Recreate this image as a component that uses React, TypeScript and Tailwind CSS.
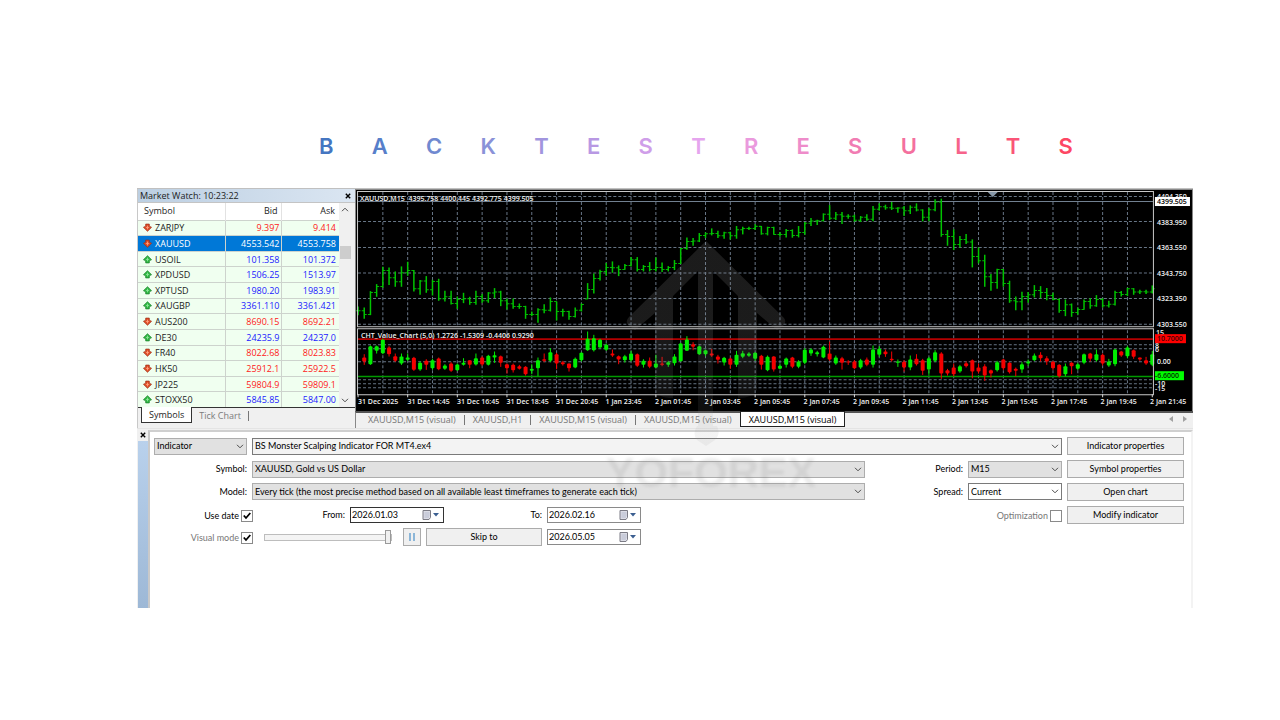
import React from "react";

const letters: [string, string][] = [
  ["B", "#4576c1"], ["A", "#577fca"], ["C", "#7089d0"], ["K", "#8a92d8"], ["T", "#a195de"],
  ["E", "#b898e3"], ["S", "#cf9ee9"], ["T", "#e5a5ee"], ["R", "#ea9add"], ["E", "#ee8cca"],
  ["S", "#f17cb3"], ["U", "#f4709e"], ["L", "#f6638a"], ["T", "#fa5577"], ["S", "#fd4763"],
];

const quotes: [string, string, string, boolean][] = [
  ["ZARJPY", "9.397", "9.414", false],
  ["XAUUSD", "4553.542", "4553.758", false],
  ["USOIL", "101.358", "101.372", true],
  ["XPDUSD", "1506.25", "1513.97", true],
  ["XPTUSD", "1980.20", "1983.91", true],
  ["XAUGBP", "3361.110", "3361.421", true],
  ["AUS200", "8690.15", "8692.21", false],
  ["DE30", "24235.9", "24237.0", true],
  ["FR40", "8022.68", "8023.83", false],
  ["HK50", "25912.1", "25922.5", false],
  ["JP225", "59804.9", "59809.1", false],
  ["STOXX50", "5845.85", "5847.00", true],
];

// Price bars: high, low, close in thirds of a unit below the pane origin.
const bars =
  "367-393-380 370-404-391 321-393-325 300-338-307 248-311-259 250-303-281 262-308-293 247-308-266 233-275-259 258-322-314 288-332-291 276-326-317 287-334-292 284-350-344 320-352-338 320-361-358 337-374-346 326-357-344 338-362-355 320-362-337 330-356-350 324-356-327 312-342-324 320-366-350 343-376-359 343-374-367 358-374-367 365-404-391 382-396-391 372-416-377 360-387-378 340-382-352 352-409-382 374-397-382 380-407-397 370-400-378 358-382-361 297-345-316 268-328-283 257-289-262 237-275-250 232-266-251 244-276-256 240-257-244 219-247-227 219-262-256 243-262-247 234-262-256 220-262-250 235-264-256 246-262-250 228-258-238 192-240-193 160-197-172 162-185-171 147-174-154 145-162-149 133-154-148 140-162-155 143-164-146 143-166-155 126-164-137 128-151-133 128-138-133 121-138-127 126-152-149 128-154-130 128-152-151 144-158-151 135-160-139 136-161-154 126-160-145 114-152-118 102-126-111 107-123-110 88-112-91 63-108-103 84-108-92 84-120-97 91-104-97 92-113-109 96-114-100 91-110-106 66-112-76 58-80-68 62-77-71 54-78-73 70-86-72 66-96-80 64-90-70 58-82-78 76-112-100 72-112-77 46-82-54 44-158-151 138-185-157 136-198-181 156-190-166 150-180-174 166-250-217 190-238-230 212-308-278 270-320-295 254-314-256 255-308-298 290-356-350 337-378-353 323-378-337 324-356-332 303-340-319 306-342-325 312-348-334 326-348-346 343-386-379 346-396-362 358-398-385 370-392-376 346-377-352 342-374-365 333-368-346 342-370-365 350-370-360 320-364-325 321-337-331 311-336-314 312-332-324 317-330-323 317-330-324 304-328-314"
    .split(" ")
    .map((b) => b.split("-").map(Number));

// Value chart candles: colour, body top, body bottom, wick top, wick bottom.
const candles =
  "r100-112-90-122 g66-120-64-122 g66-80-64-88 g47-87-44-90 r70-90-66-97 r96-110-88-113 g97-118-88-122 g100-107-88-110 r101-137-98-140 g116-136-112-140 r110-122-105-137 g108-132-104-137 r103-135-100-138 g124-134-120-137 r118-140-114-143 g121-138-118-140 g116-122-102-124 r108-122-108-132 g102-121-88-124 r100-121-96-125 g95-122-92-124 g93-100-82-116 r96-116-94-128 r120-132-118-148 r122-138-118-145 r126-134-122-136 r128-150-126-154 g134-140-120-150 g108-132-100-156 r105-110-88-114 g84-110-72-114 r90-118-86-135 r114-120-110-124 r118-132-118-142 g104-130-100-132 g86-108-84-112 g44-78-22-80 g42-78-32-82 g47-70-44-73 g62-77-58-80 r88-94-76-98 r96-106-94-120 g96-108-92-115 g88-108-80-112 r90-125-88-128 g110-122-105-130 r110-128-100-132 g118-130-92-132 r118-122-98-126 g114-122-110-128 g97-117-90-124 g58-111-56-112 g46-80-36-80 r60-68-54-78 g66-90-64-92 g78-90-76-96 r88-94-74-98 r97-107-92-118 g101-115-98-124 r103-122-100-134 g92-122-80-128 g87-98-80-102 g88-95-84-98 g86-104-84-110 r95-122-92-136 g98-138-94-141 r97-136-96-142 g125-134-118-136 g103-122-100-130 r100-128-98-132 g112-128-108-132 g77-116-72-120 g76-88-72-95 g84-90-80-97 g68-100-64-102 r88-106-52-110 g100-118-94-122 r102-116-98-136 r112-115-108-122 r112-132-108-135 g108-130-104-134 r106-122-100-126 g76-122-64-130 g74-92-66-98 r82-90-76-98 r104-108-82-112 g112-116-106-128 r113-130-108-142 g106-130-94-138 r104-120-90-124 r108-140-104-152 g102-136-98-152 g84-110-78-114 r88-148-84-164 r138-148-134-154 r130-150-118-156 g126-142-122-146 r117-126-112-130 r108-142-106-162 r130-142-118-148 r126-154-120-170 r138-148-136-160 g114-138-110-142 r106-132-104-138 r116-144-114-148 r134-140-130-156 g120-136-114-146 g112-118-106-126 g94-108-88-110 r92-102-84-112 r102-112-96-122 r113-132-110-138 r122-156-120-160 g126-150-118-156 r116-126-114-150 g120-134-116-138 g90-116-88-120 r88-104-86-112 g90-108-76-112 r92-118-88-124 g112-124-104-128 g76-120-74-126 r82-94-80-98 g70-96-66-102 r78-98-76-104 r100-106-100-110 r108-118-98-122 g90-122-80-126"
    .split(" ")
    .map((c) => ({ up: c[0] === "g", v: c.slice(1).split("-").map(Number) }));

const times = [
  "31 Dec 2025", "31 Dec 14:45", "31 Dec 16:45", "31 Dec 18:45", "31 Dec 20:45", "1 Jan 23:45",
  "2 Jan 01:45", "2 Jan 03:45", "2 Jan 05:45", "2 Jan 07:45", "2 Jan 09:45", "2 Jan 11:45",
  "2 Jan 13:45", "2 Jan 15:45", "2 Jan 17:45", "2 Jan 19:45", "2 Jan 21:45",
];

const barX = (i: number) => 3 + i * 6.198;

function PriceChart() {
  const grid = Array.from({ length: 31 }, (_, i) => barX((i + 1) * 4));
  const py = (v: number) => v / 3 - 5;
  const vy = (v: number) => v / 3 + 135;
  return (
    <svg viewBox="0 0 837 222" className="block h-auto w-full bg-black" role="img" aria-label="XAUUSD M15 chart" fontFamily="'Open Sans', 'Noto Sans', sans-serif" fontWeight="600">
      <g stroke="#677585" strokeWidth="1" strokeDasharray="3 2">
        {grid.map((x) => (
          <path key={x} d={`M${x} 3V136M${x} 141V205`} />
        ))}
        {[7.5, 32.5, 58.5, 84, 109.5, 135, 155.5, 159.5, 172.5, 190.5, 194.5, 198.5].map((y) => (
          <path key={y} d={`M3 ${y}H797`} />
        ))}
      </g>
      <path d="M3 12.5H797" stroke="#718090" />
      <path d="M632 3h10l-5 5z" fill="#8797a8" />
      <g fill="none">
        {bars.map(([h, l, c], i) => {
          const o = i ? bars[i - 1][2] : c;
          const open = Math.min(Math.max(o, h), l);
          const x = barX(i);
          return (
            <g key={i}>
              <path d={`M${x - 2.5} ${py(open)}H${x}M${x} ${py(c)}h2.500`} stroke="#00b400" />
              <path d={`M${x} ${py(h)}V${py(l)}`} stroke="#00c400" strokeWidth="1.500" />
            </g>
          );
        })}
      </g>
      <path d="M3 150H797" stroke="#b40000" strokeWidth="1.6" />
      <path d="M3 187.3H797" stroke="#009a00" strokeWidth="1.6" />
      {candles.map(({ up, v }, i) => (
        <g key={i} fill={up ? "#00ee00" : "#f40000"}>
          <rect x={barX(i + 1) - 2} y={vy(v[0])} width="4" height={(v[1] - v[0]) / 3} rx="1" />
          <rect x={barX(i + 1) - 0.5} y={vy(v[2])} width="1" height={(v[3] - v[2]) / 3} />
        </g>
      ))}
      <path d="M2.5 2.5H797.5V137.5H2.5zM2.5 139.5H797.5V205.5H2.5z" fill="none" stroke="#c8c8c8" />
      <path d="M0.5 222V0.5H836.5V222" fill="none" stroke="#8a8a8a" />
      <g fill="#f0f0f0" fontSize="7">
        <text x="5" y="12">XAUUSD,M15&nbsp; 4395.758 4400.445 4392.775 4399.505</text>
        <text x="6" y="148.500">CHT_Value_Chart (5,0) 1.2726 -1.5309 -0.4406 0.9290</text>
        <text x="801" y="10">4404.350</text>
        <text x="801" y="35.500">4383.950</text>
        <text x="801" y="61">4363.550</text>
        <text x="801" y="86.500">4343.750</text>
        <text x="801" y="112">4323.350</text>
        <text x="801" y="138">4303.550</text>
        <text x="800" y="146">15</text>
        <text x="799" y="159">8</text>
        <text x="799" y="163">6</text>
        <text x="801" y="175">0.00</text>
        <text x="799" y="197">-10</text>
        <text x="799" y="202">-15</text>
        {times.map((t, i) => (
          <text key={t} x={3 + i * 49.45} y="215">{t}</text>
        ))}
      </g>
      <path d={times.map((_, i) => `M${barX(i * 8)} 205v3`).join("")} stroke="#d8d8d8" />
      <rect x="799" y="8" width="35" height="9" fill="#fff" />
      <text x="801" y="15" fontSize="7" fill="#000">4399.505</text>
      <rect x="799" y="145" width="31" height="9" fill="#ff0000" />
      <text x="801" y="152" fontSize="7" fill="#400000">10.7000</text>
      <rect x="799" y="182" width="29" height="9" fill="#00ff00" />
      <text x="799" y="189" fontSize="7" fill="#003000">-6.6000</text>
    </svg>
  );
}

function Direction({ up }: { up: boolean }) {
  return (
    <svg viewBox="0 0 10 10" className={up ? "size-[9px]" : "size-[9px] rotate-180"} aria-hidden="true">
      <path d="M5 .8 9.500 5.200 7 6.500V8.800H3V6.500L.5 5.200z" fill={up ? "#2fb944" : "#e04e28"} stroke={up ? "#1c7f2b" : "#9c2f16"} strokeWidth=".8" />
      <path d="M5 3v4M3.500 5h3" stroke={up ? "#8fe59a" : "#ff9f7d"} />
    </svg>
  );
}

function Chevron({ className = "" }: { className?: string }) {
  return (
    <svg viewBox="0 0 8 5" className={"pointer-events-none h-[5px] w-2 " + className} aria-hidden="true">
      <path d="M1 .8 4 3.800 7 .8" fill="none" stroke="#4c4c4c" />
    </svg>
  );
}

function CloseIcon() {
  return (
    <svg viewBox="0 0 6 6" className="size-[6px]" aria-hidden="true">
      <path d="M.8.8l4.400 4.400M5.200.8.8 5.200" stroke="#000" strokeWidth="1.400" />
    </svg>
  );
}

function MarketWatch() {
  return (
    <section className="flex w-[218px] flex-none flex-col border-l border-[#c8c8c8] bg-[#f0f0f0] font-['Open_Sans','Noto_Sans',sans-serif] text-[9px] leading-[14px] text-[#1c1c1c]">
      <header className="flex h-[13px] items-center justify-between bg-gradient-to-r from-[#bccfe2] to-[#dbe6f2] pr-1 pl-[2px]">
        <h2>Market Watch: 10:23:22</h2>
        <button type="button" aria-label="Close market watch"><CloseIcon /></button>
      </header>
      <div className="flex border-t border-[#c4c4c4]">
        <table className="h-[204px] w-[201px] table-fixed border-collapse bg-white">
          <colgroup>
            <col />
            <col className="w-[56px]" />
            <col className="w-[58px]" />
          </colgroup>
          <thead>
            <tr className="h-[17px]">
              <th className="border-r border-[#e2e2e2] p-0 pl-[6px] text-left font-normal">Symbol</th>
              <th className="border-r border-[#e2e2e2] p-0 pr-[3px] text-right font-normal">Bid</th>
              <th className="p-0 pr-1 text-right font-normal">Ask</th>
            </tr>
          </thead>
          <tbody className="leading-[13px]">
            {quotes.map(([symbol, bid, ask, up]) => {
              const active = symbol === "XAUUSD";
              const price = active ? "text-white" : up ? "text-[#1a1aff]" : "text-[#ff1a1a]";
              return (
                <tr key={symbol} className={active ? "bg-[#0078d7] text-white" : "bg-[#f0fff0]"}>
                  <td className="border-t border-r border-[#cdd3cd] p-0 pl-[5px]">
                    <span className="flex items-center gap-[3px]"><Direction up={up} />{symbol}</span>
                  </td>
                  <td className={"border-t border-r border-[#cdd3cd] p-0 pr-px text-right " + price}>{bid}</td>
                  <td className={"border-t border-[#cdd3cd] p-0 pr-[3px] text-right " + price}>{ask}</td>
                </tr>
              );
            })}
          </tbody>
        </table>
        <div className="flex w-[12px] flex-col items-center py-[4px]" aria-hidden="true">
          <Chevron className="rotate-180" />
          <div className="mt-[34px] h-[13px] w-[11px] bg-[#cdcdcd]" />
          <Chevron className="mt-auto" />
        </div>
      </div>
      <nav className="flex h-[18px] items-start border-t border-[#333] pl-[3px]">
        <button type="button" className="-mt-px h-[16px] border border-t-0 border-[#333] bg-white px-[7px]">Symbols</button>
        <button type="button" className="h-[15px] px-[7px] text-[#7c7c7c]">Tick Chart</button>
        <span className="mt-[3px] h-[10px] w-px bg-[#777]" />
      </nav>
    </section>
  );
}

function ChartTabs() {
  const tabs = ["XAUUSD,M15 (visual)", "XAUUSD,H1", "XAUUSD,M15 (visual)", "XAUUSD,M15 (visual)"];
  return (
    <nav className="flex h-[17px] items-start border-t-2 border-t-[#555] border-l border-l-[#888] bg-[#f0f0f0] pl-[4px] font-['Open_Sans','Noto_Sans',sans-serif] text-[9px] leading-[13px] text-[#777]">
      {tabs.map((t, i) => (
        <React.Fragment key={i}>
          {i > 0 && <span className="mt-[2px] h-[10px] w-px bg-[#777]" />}
          <button type="button" className="px-[8px]">{t}</button>
        </React.Fragment>
      ))}
      <button type="button" className="-mt-[2px] h-[16px] border border-[#222] bg-white px-[8px] text-black">XAUUSD,M15 (visual)</button>
      <span className="mt-[3px] mr-[6px] ml-auto flex gap-[10px]" aria-hidden="true">
        <svg viewBox="0 0 4 6" className="h-[6px] w-1"><path d="M4 0v6L0 3z" fill="#a0a0a0" /></svg>
        <svg viewBox="0 0 4 6" className="h-[6px] w-1"><path d="M0 0v6l4-3z" fill="#a0a0a0" /></svg>
      </span>
    </nav>
  );
}

function Picker({ id, label, value, className, tone }: { id: string; label?: string; value: string; className: string; tone: string }) {
  return (
    <div className={"relative h-[17px] " + className}>
      <select id={id} aria-label={label} className={"h-full w-full appearance-none rounded-none border pr-4 pl-[2px] " + tone}>
        <option>{value}</option>
      </select>
      <Chevron className="absolute top-[6px] right-[3px]" />
    </div>
  );
}

function DateField({ id, label, value, tone = "border-[#8a8a8a]" }: { id: string; label?: string; value: string; tone?: string }) {
  return (
    <div className={"flex h-[16px] w-[94px] flex-none items-center border bg-white pr-1 " + tone}>
      <input id={id} aria-label={label} defaultValue={value} className="w-full min-w-0 pl-px outline-none" />
      <svg viewBox="0 0 17 10" className="h-[10px] w-[17px] flex-none" aria-hidden="true">
        <path d="M1 .5h7.500v7L7 9.500H1z" fill="#dcdde6" stroke="#7b7b85" />
        <path d="M2 3h6M2 5h6M2 7h5M4 2v6M6 2v6" stroke="#b3b6c8" strokeWidth=".5" />
        <path d="M11 3h6l-3 3.500z" fill="#3b5f91" />
      </svg>
    </div>
  );
}

function Check({ id, checked }: { id: string; checked?: boolean }) {
  return (
    <span className="relative block size-[12px]">
      <input id={id} type="checkbox" defaultChecked={checked} className="block size-full appearance-none border border-[#8a8a8a] bg-white" />
      {checked && (
        <svg viewBox="0 0 12 12" className="pointer-events-none absolute inset-0" aria-hidden="true">
          <path d="M2.800 5.500 5 8 9.300 3" fill="none" stroke="#000" strokeWidth="1.800" />
        </svg>
      )}
    </span>
  );
}

const buttonLook = "h-[18px] flex-none border border-[#ababab] bg-[#f0f0f0] text-center";

function Tester() {
  return (
    <section className="flex h-[180px] border-t border-[#e4e4e4] bg-[#f0f0f0] font-[Lato,'Liberation_Sans',sans-serif] text-[9px] leading-[14px] text-black">
      <div className="flex w-[11px] flex-none flex-col items-center">
        <button type="button" aria-label="Close tester" className="mt-[3px] mb-[3px] h-[6px]"><CloseIcon /></button>
        <div className="w-[10px] flex-1 bg-gradient-to-b from-[#b9d1ec] to-[#9db8d6]" />
      </div>
      <form className="mt-px min-w-0 flex-1 border-t-2 border-r-2 border-l-2 border-t-[#cfcfcf] border-r-[#f3f3f3] border-l-[#c9c9c9] bg-white pt-[5px] pr-[7px] pl-[4px]">
        <div className="flex h-[109px] flex-col justify-between">
          <div className="flex h-[18px] items-center gap-[5px]">
            <Picker id="kind" label="Program type" value="Indicator" className="w-[93px] flex-none" tone="border-[#adadad] bg-[#e1e1e1]" />
            <Picker id="program" label="Program" value="BS Monster Scalping Indicator FOR MT4.ex4" className="flex-1" tone="border-[#7a7a7a] bg-[#f3f3f3]" />
            <button type="button" className={buttonLook + " w-[117px]"}>Indicator properties</button>
          </div>
          <div className="flex h-[18px] items-center gap-[5px]">
            <label htmlFor="symbol" className="w-[93px] flex-none text-right">Symbol:</label>
            <Picker id="symbol" value="XAUUSD, Gold vs US Dollar" className="flex-1" tone="border-[#adadad] bg-[#e1e1e1]" />
            <label htmlFor="period" className="w-[93px] flex-none text-right">Period:</label>
            <Picker id="period" value="M15" className="w-[94px] flex-none" tone="border-[#adadad] bg-[#e1e1e1]" />
            <button type="button" className={buttonLook + " w-[117px]"}>Symbol properties</button>
          </div>
          <div className="flex h-[18px] items-center gap-[5px]">
            <label htmlFor="model" className="w-[93px] flex-none text-right">Model:</label>
            <Picker id="model" value="Every tick (the most precise method based on all available least timeframes to generate each tick)" className="flex-1" tone="border-[#adadad] bg-[#e1e1e1]" />
            <label htmlFor="spread" className="w-[93px] flex-none text-right">Spread:</label>
            <Picker id="spread" value="Current" className="w-[94px] flex-none" tone="border-[#7a7a7a] bg-white" />
            <button type="button" className={buttonLook + " w-[117px]"}>Open chart</button>
          </div>
          <div className="flex h-[18px] items-center gap-[5px]">
            <div className="flex w-[99px] flex-none items-center justify-end gap-[2px] pt-[3px]">
              <label htmlFor="use-date">Use date</label>
              <Check id="use-date" checked />
            </div>
            <label htmlFor="from" className="w-[87px] flex-none text-right">From:</label>
            <DateField id="from" value="2026.01.03" tone="border-[#333]" />
            <label htmlFor="to" className="w-[93px] flex-none text-right">To:</label>
            <DateField id="to" value="2026.02.16" />
            <div className="flex flex-1 items-center justify-end gap-[2px] pt-[3px] text-[#777]">
              <label htmlFor="optimization">Optimization</label>
              <Check id="optimization" />
            </div>
            <button type="button" className={buttonLook + " w-[117px]"}>Modify indicator</button>
          </div>
          <div className="flex h-[18px] items-center gap-[5px]">
            <div className="flex w-[99px] flex-none items-center justify-end gap-[2px] pt-px text-[#777]">
              <label htmlFor="visual">Visual mode</label>
              <Check id="visual" checked />
            </div>
            <input
              type="range"
              aria-label="Visual mode speed"
              defaultValue={100}
              className="mr-[6px] ml-[6px] h-[7px] w-[128px] flex-none appearance-none border border-[#bdbdbd] bg-[#f4f4f4] [&::-webkit-slider-thumb]:h-[14px] [&::-webkit-slider-thumb]:w-[6px] [&::-webkit-slider-thumb]:appearance-none [&::-webkit-slider-thumb]:border [&::-webkit-slider-thumb]:border-[#9a9a9a] [&::-webkit-slider-thumb]:bg-[#f0f0f0]"
            />
            <button type="button" aria-label="Pause" className={buttonLook + " flex w-[18px] items-center justify-center"}>
              <svg viewBox="0 0 6 8" className="h-2 w-[6px]" aria-hidden="true"><path d="M1 0v8M5 0v8" stroke="#4a90c8" strokeWidth="1.200" /></svg>
            </button>
            <button type="button" className={buttonLook + " w-[116px]"}>Skip to</button>
            <DateField id="skip" label="Skip to date" value="2026.05.05" />
          </div>
        </div>
      </form>
    </section>
  );
}

function Watermark() {
  return (
    <svg viewBox="0 0 220 260" className="pointer-events-none absolute top-[52px] left-[464px] h-[260px] w-[220px]" aria-hidden="true">
      <defs>
        <filter id="soft"><feGaussianBlur stdDeviation="1.500" /></filter>
        <linearGradient id="fade" x1="0" y1="0" x2="0" y2="1">
          <stop offset="0" stopColor="#909090" />
          <stop offset=".4" stopColor="#909090" />
          <stop offset=".8" stopColor="#909090" stopOpacity=".55" />
        </linearGradient>
      </defs>
      <path opacity=".19" fill="url(#fade)" d="M105 1 183 78q3 4-1 8l-6 4-20-17V150q-4 8-19 8V56L112 31V186h4q4 8-2 14l-9 6-9-6q-5-6 0-14h1V31L72 56V158q-15 0-18-8V73L34 90l-7-5q-3-4 1-8z" />
      <text opacity=".13" filter="url(#soft)" x="110" y="247" textAnchor="middle" fontFamily="'Liberation Sans', Arial, sans-serif" fontSize="43" fontWeight="700" fill="#777777">YOFOREX</text>
    </svg>
  );
}

export default function App() {
  return (
    <main className="min-h-screen bg-white pt-[131px] pr-[87px] pb-8 pl-[137px]">
      <h1 aria-label="Backtest results" className="mr-[120px] ml-[182px] flex h-[57px] justify-between font-['Inter','Open_Sans',sans-serif] text-[22px] leading-[30px] font-semibold">
        {letters.map(([letter, color], i) => (
          <span key={i} style={{ color }}>{letter}</span>
        ))}
      </h1>
      <div className="relative">
        <div className="flex border-t border-[#c0c0c0] bg-[#f0f0f0]">
          <MarketWatch />
          <div className="min-w-0 flex-1">
            <PriceChart />
            <ChartTabs />
          </div>
        </div>
        <Tester />
        <Watermark />
      </div>
    </main>
  );
}
